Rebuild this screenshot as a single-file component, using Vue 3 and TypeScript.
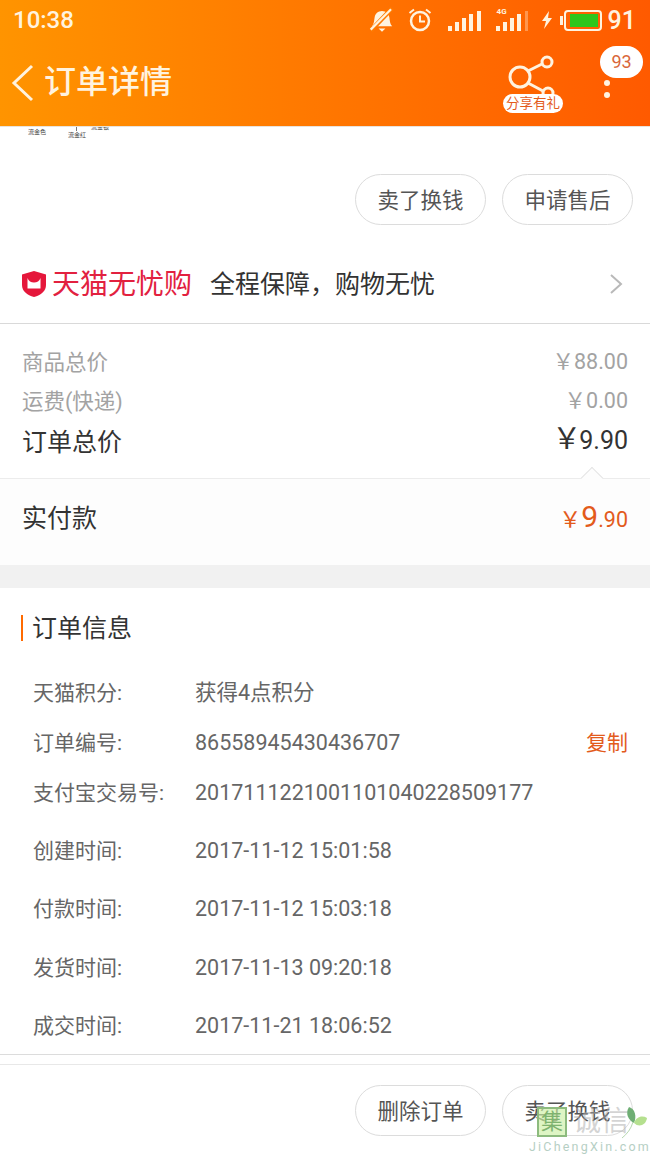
<script setup lang="ts">
interface InfoRow {
  label: string;
  value: string;
  tall?: boolean;
  copy?: boolean;
}

const infoRows: InfoRow[] = [
  { label: '天猫积分:', value: '获得4点积分' },
  { label: '订单编号:', value: '86558945430436707', copy: true },
  { label: '支付宝交易号:', value: '2017111221001101040228509177' },
  { label: '创建时间:', value: '2017-11-12 15:01:58', tall: true },
  { label: '付款时间:', value: '2017-11-12 15:03:18', tall: true },
  { label: '发货时间:', value: '2017-11-13 09:20:18', tall: true },
  { label: '成交时间:', value: '2017-11-21 18:06:52', tall: true },
];
</script>

<template>
  <div class="page">
    <header class="top">
      <div class="status">
        <span class="clock">10:38</span>
        <div class="status-right">
          <svg width="26" height="26" viewBox="2 2 22 23" fill="none">
            <path d="M4 19c2-2 2-5 2.500-8 .5-3 3-5.500 6.500-5.500s6 2.500 6.500 5.500c.4 3 .5 6 2.500 8z" fill="#fff3df" />
            <path d="M10 21h6l-3 3z" fill="#fff3df" />
            <path d="M3 23 22 3" stroke="#ff7a00" stroke-width="4" />
            <path d="M3 22 21 4" stroke="#fff3df" stroke-width="2" />
          </svg>
          <svg class="alarm" width="26" height="26" viewBox="0 0 26 26" fill="none" stroke="#fff3df">
            <circle cx="13" cy="14" r="9" stroke-width="2.500" />
            <path d="M13 8.500V14.500H18" stroke-width="2" />
            <path d="M2.500 6 7 2.500M23.500 6 19 2.500" stroke-width="2" />
          </svg>
          <div class="bars">
            <i style="height: 5px"></i><i style="height: 9px"></i><i style="height: 13px"></i><i style="height: 17px"></i><i style="height: 20px"></i>
          </div>
          <div class="bars sim">
            <span class="net">4G</span>
            <i style="height: 5px"></i><i style="height: 9px"></i><i style="height: 13px"></i><i style="height: 17px"></i><i class="dim" style="height: 20px"></i>
          </div>
          <svg class="bolt" width="12" height="20" viewBox="0 0 12 20">
            <path d="M8 1 1 11h4l-2 8 8-11H7z" fill="#fff3df" />
          </svg>
          <div class="battery"><span class="level"></span></div>
          <span class="pct">91</span>
        </div>
      </div>
      <div class="nav">
        <svg class="back" width="24" height="38" viewBox="0 0 24 38" fill="none">
          <path d="M21 2 3 19l18 17" stroke="#fff3df" stroke-width="3" />
        </svg>
        <span class="title">订单详情</span>
        <div class="share">
          <svg width="66" height="50" viewBox="0 0 66 50" fill="none" stroke="#fff3df" stroke-width="3">
            <circle cx="22" cy="26" r="10" />
            <circle cx="49" cy="11" r="5" />
            <circle cx="50" cy="42" r="5" />
            <path d="M30 20 44 13M30 32 45 40" />
          </svg>
          <span class="gift">分享有礼</span>
        </div>
        <div class="more">
          <span class="count">93</span>
          <i></i>
          <i></i>
        </div>
      </div>
    </header>

    <div class="crop-labels">
      <span>流金色</span>
      <span class="lower">流金红</span>
      <span class="cut">流金银</span>
    </div>

    <div class="actions first">
      <button class="pill">卖了换钱</button>
      <button class="pill">申请售后</button>
    </div>

    <div class="promise">
      <svg class="shield" width="28" height="28" viewBox="0 0 28 28">
        <path d="M2 4.500 14 1l12 3.500V15c0 6-5 10-12 12C7 25 2 21 2 15z" fill="#e5173b" />
        <path d="M7.500 8c1 3 3.500 4.500 6.500 4.500S19.500 11 20.500 8v10.500h-13z" fill="#fff" />
      </svg>
      <span class="brand">天猫无忧购</span>
      <span class="promise-text">全程保障&#xFF0C;购物无忧</span>
      <svg class="chevron" width="14" height="22" viewBox="0 0 14 22" fill="none">
        <path d="M2 2l10 9-10 9" stroke="#b9b9b9" stroke-width="2" />
      </svg>
    </div>

    <section class="prices">
      <div class="price-row muted"><span>商品总价</span><span class="amount"><em>&#xFFE5;</em>88.00</span></div>
      <div class="price-row muted"><span>运费(快递)</span><span class="amount"><em>&#xFFE5;</em>0.00</span></div>
      <div class="price-row total"><span>订单总价</span><span class="amount"><em>&#xFFE5;</em>9.90</span></div>
    </section>

    <section class="paid">
      <span class="caret"></span>
      <span class="paid-label">实付款</span>
      <span class="paid-amount"><em>&#xFFE5;</em><b>9</b>.90</span>
    </section>

    <div class="gap"></div>

    <section class="info">
      <h2 class="info-title">订单信息</h2>
      <div v-for="row in infoRows" :key="row.label" class="info-row" :class="{ tall: row.tall }">
        <span class="info-label">{{ row.label }}</span>
        <span class="info-value">{{ row.value }}</span>
        <span v-if="row.copy" class="copy">复制</span>
      </div>
    </section>

    <div class="actions last">
      <button class="pill">删除订单</button>
      <button class="pill">卖了换钱</button>
    </div>

    <div class="watermark">
      <div class="wm-top">
        <span class="wm-box">集</span>
        <span class="wm-name">诚信</span>
        <svg class="wm-leaf" width="26" height="34" viewBox="0 0 26 34">
          <path d="M8 2c6 2 8 9 5 16-6-3-9-10-5-16z" fill="#6fae74" />
          <path d="M13 18c2-6 8-8 13-5-1 7-8 10-13 5z" fill="#b5e08f" />
          <path d="M12 17C10 24 6 29 1 33" stroke="#b8d8b0" fill="none" />
        </svg>
      </div>
      <span class="wm-url">JiChengXin.com</span>
    </div>
  </div>
</template>

<style scoped>
.page {
  position: relative;
  width: 650px;
  height: 1155px;
  overflow: hidden;
  background: #fff;
  font-family: Roboto, "Noto Sans CJK SC", sans-serif;
  color: #333;
}

.top {
  position: relative;
  z-index: 1;
  height: 127px;
  box-sizing: border-box;
  background: linear-gradient(90deg, #ff9400, #ff5a00);
  color: #fff3df;
  border-bottom: 1px solid #e8e3dc;
}

.status {
  display: flex;
  justify-content: space-between;
  align-items: center;
  height: 40px;
  padding: 0 14px 0 13px;
}

.clock {
  font-size: 24px;
  font-weight: 500;
}

.status-right {
  display: flex;
  align-items: center;
}

.alarm {
  margin-left: 12px;
}

.bars {
  position: relative;
  display: flex;
  align-items: flex-end;
  gap: 3.250px;
  height: 22px;
  margin-left: 15px;
}

.bars i {
  width: 4px;
  background: #fff3df;
}

.bars i.dim {
  width: 3px;
  background: rgba(255, 243, 223, 0.35);
}

.net {
  position: absolute;
  left: 1px;
  top: -2px;
  font-size: 8px;
  font-weight: 700;
}

.bolt {
  margin-left: 13px;
}

.battery {
  position: relative;
  width: 38px;
  height: 21px;
  margin-left: 11px;
  box-sizing: border-box;
  border: 2px solid #fff3df;
  border-radius: 4px;
  padding: 2px 2px 2px 4px;
}

.battery::before {
  content: "";
  position: absolute;
  left: -6px;
  top: 4px;
  width: 3px;
  height: 9px;
  background: #fff3df;
}

.level {
  display: block;
  width: 28px;
  height: 13px;
  background: #2ec61c;
}

.pct {
  margin-left: 6px;
  font-size: 25px;
  font-weight: 500;
}

.nav {
  display: flex;
  align-items: flex-start;
  height: 86px;
  padding-left: 11px;
}

.back {
  margin-top: 24px;
}

.title {
  margin: 26px 0 0 9px;
  font-size: 32px;
  font-weight: 500;
  line-height: 1;
}

.share {
  position: relative;
  width: 66px;
  height: 62px;
  margin-left: auto;
  margin-top: 11px;
}

.gift {
  position: absolute;
  left: 5px;
  top: 43px;
  width: 60px;
  height: 19px;
  border-radius: 10px;
  background: #fff;
  color: #e35b1c;
  font-size: 13.500px;
  line-height: 19px;
  text-align: center;
}

.more {
  position: relative;
  width: 86px;
  height: 86px;
  display: flex;
  flex-direction: column;
  align-items: center;
  padding-top: 40px;
  box-sizing: border-box;
  gap: 6px;
}

.more i {
  width: 6px;
  height: 6px;
  border-radius: 50%;
  background: #fff3df;
}

.count {
  position: absolute;
  left: 36px;
  top: 6px;
  width: 43px;
  height: 32px;
  border-radius: 16px;
  background: #fff;
  color: #d9673a;
  font-size: 18px;
  line-height: 32px;
  text-align: center;
}

.crop-labels {
  display: flex;
  gap: 22px;
  height: 47px;
  padding-left: 28px;
  box-sizing: border-box;
  font-size: 6px;
  color: #444;
}

.crop-labels .lower {
  position: relative;
  margin-top: 3px;
}

.crop-labels .lower::before {
  content: "";
  position: absolute;
  left: 8px;
  top: -3px;
  width: 1px;
  height: 4px;
  background: #777;
}

.crop-labels .cut {
  margin: -5px 0 0 -17px;
}

.actions {
  display: flex;
  justify-content: flex-end;
  gap: 16px;
  padding-right: 17px;
}

.pill {
  width: 131px;
  height: 51px;
  border: 1px solid #dcdcdc;
  border-radius: 26px;
  background: #fff;
  color: #555;
  font: 400 21.500px "Noto Sans CJK SC", sans-serif;
  padding: 0 0 2px;
}

.promise {
  display: flex;
  align-items: center;
  height: 99px;
  padding: 16px 27px 0 20px;
  border-bottom: 1px solid #d9d9d9;
  box-sizing: border-box;
}

.shield,
.chevron {
  margin-top: 3px;
}

.brand {
  margin-left: 4px;
  color: #e2213f;
  font-size: 28px;
}

.promise-text {
  margin-left: 18px;
  font-size: 25px;
  color: #333;
}

.chevron {
  margin-left: auto;
}

.prices {
  padding: 17px 22px 0;
  height: 154px;
  box-sizing: border-box;
}

.price-row {
  display: flex;
  justify-content: space-between;
  align-items: center;
  height: 39px;
}

.price-row.muted {
  font-size: 21.500px;
  color: #a3a3a3;
}

.price-row.total {
  height: 41px;
  font-size: 25px;
  color: #333;
}

.price-row.total em {
  font-size: 29px;
  line-height: 1;
  margin-right: -2px;
}

.amount {
  margin-top: -2px;
}

.amount em,
.paid-amount em {
  font-style: normal;
  font-family: "Noto Sans CJK SC", sans-serif;
}

.paid {
  position: relative;
  display: flex;
  justify-content: space-between;
  align-items: center;
  height: 87px;
  box-sizing: border-box;
  padding: 0 22px 12px;
  background: #fdfdfd;
  border-top: 1px solid #ececec;
}

.caret {
  position: absolute;
  right: 50px;
  top: -9px;
  width: 15px;
  height: 15px;
  border-left: 1px solid #e4e4e4;
  border-top: 1px solid #e4e4e4;
  background: #fdfdfd;
  transform: rotate(45deg);
}

.paid-label {
  font-size: 25px;
}

.paid-amount {
  color: #e35b1c;
  font-size: 21.500px;
}

.paid-amount em {
  font-size: 22px;
  line-height: 1;
}

.paid-amount b {
  font-size: 30px;
  font-weight: 400;
}

.gap {
  height: 23px;
  background: #f1f1f1;
}

.info {
  height: 467px;
  box-sizing: border-box;
  padding-top: 27px;
  border-bottom: 1px solid #dcdcdc;
}

.info-title {
  height: 26px;
  margin: 0 0 27px 21px;
  padding-left: 9px;
  border-left: 2px solid #ff6a00;
  font-size: 25px;
  font-weight: 400;
  line-height: 28px;
  color: #333;
}

.info-row {
  display: flex;
  align-items: baseline;
  height: 50px;
  line-height: 50px;
  padding: 0 22px 0 33px;
  font-size: 21px;
  color: #666;
}

.info-row.tall {
  height: 58.300px;
  line-height: 58.300px;
}

.info-row:not(.tall) + .info-row.tall {
  margin-top: 4px;
}

.info-label {
  width: 162px;
  flex-shrink: 0;
}

.info-value {
  font-size: 21.500px;
}

.copy {
  margin-left: auto;
  color: #e35b1c;
}

.last {
  margin-top: 9px;
  padding-top: 20px;
  border-top: 1px solid #e8e8e8;
}

.watermark {
  position: absolute;
  right: 0;
  bottom: 1px;
  width: 120px;
  display: flex;
  flex-direction: column;
  align-items: center;
  pointer-events: none;
}

.wm-top {
  display: flex;
  align-items: center;
  width: 100%;
  height: 34px;
}

.wm-box {
  width: 30px;
  height: 30px;
  box-sizing: border-box;
  margin-left: 7px;
  border: 2px solid #8dbb7e;
  background: rgba(205, 240, 165, 0.65);
  color: #7fb36f;
  font-size: 22px;
  line-height: 25px;
  text-align: center;
}

.wm-name {
  margin-left: 6px;
  font-size: 28px;
  line-height: 34px;
  color: rgba(170, 170, 170, 0.5);
}

.wm-leaf {
  margin-left: -8px;
}

.wm-url {
  font-size: 12.500px;
  color: #b6cfc4;
  letter-spacing: 2.200px;
  white-space: nowrap;
}
</style>
